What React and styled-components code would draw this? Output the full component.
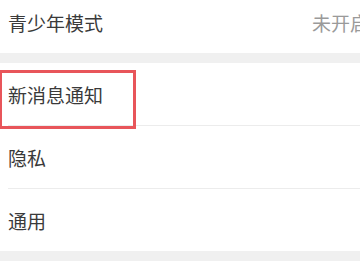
import styled, { createGlobalStyle } from "styled-components";

const GlobalStyle = createGlobalStyle`
  html, body {
    margin: 0;
    padding: 0;
    background: #ffffff;
    overflow: hidden;
  }
`;

const Screen = styled.div`
  width: 400px;
  margin-top: -9px;
  background: #f0f0f0;
  font-family: "Noto Sans CJK SC", "Noto Sans", sans-serif;
`;

const Group = styled.div`
  background: #ffffff;
  margin-bottom: 10px;
`;

const Spacer = styled.div`
  height: 20px;
  background: #ffffff;
`;

const Row = styled.div`
  position: relative;
  display: flex;
  align-items: center;
  justify-content: space-between;
  height: 62px;
  margin-left: 8px;
  padding-right: 31px;
  border-bottom: ${(p) => (p.last ? "none" : "1px solid #ececec")};
`;

const Label = styled.span`
  font-size: 19px;
  color: #3a3a3a;
  line-height: 1;
`;

const Value = styled.span`
  font-size: 19px;
  color: #9a9a9a;
  line-height: 1;
`;

const Highlight = styled.div`
  position: absolute;
  top: 7px;
  left: -9px;
  width: 137px;
  height: 59px;
  border: 3px solid #e8555a;
  box-sizing: border-box;
  pointer-events: none;
`;

const App = () => {
  return (
    <>
      <GlobalStyle />
      <Screen>
        <Group>
          <Row last>
            <Label>青少年模式</Label>
            <Value>未开启</Value>
          </Row>
        </Group>
        <Group>
          <Row>
            <Label>新消息通知</Label>
            <Highlight />
          </Row>
          <Row>
            <Label>隐私</Label>
          </Row>
          <Row last>
            <Label>通用</Label>
          </Row>
        </Group>
        <Spacer />
      </Screen>
    </>
  );
};

export default App;
